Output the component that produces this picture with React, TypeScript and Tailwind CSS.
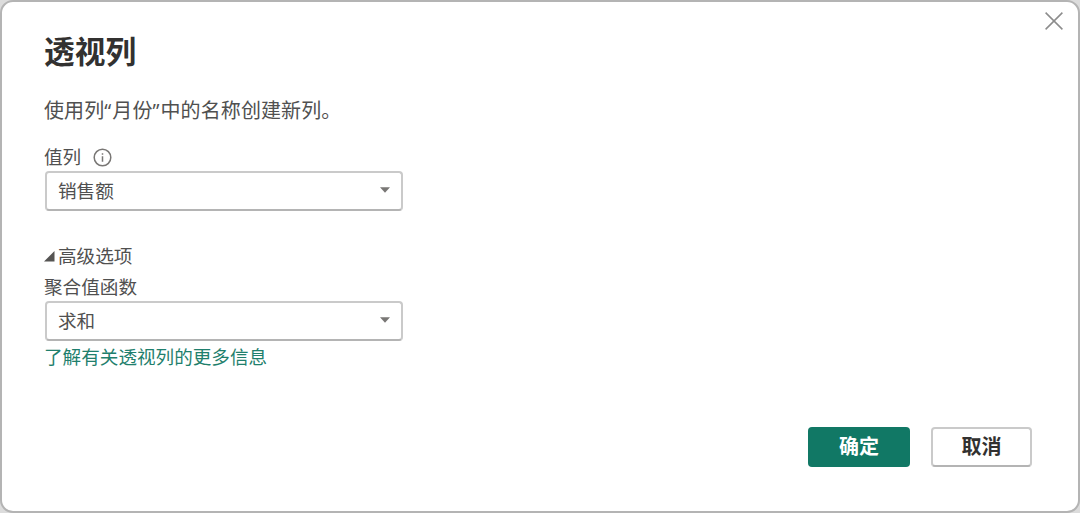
import React from 'react';

interface SelectBoxProps {
  value: string;
}

const SelectBox = ({ value }: SelectBoxProps) => {
  return (
    <button
      type="button"
      className="ml-px flex h-10 w-[358px] items-center justify-between rounded-[4px] border-2 border-[#cacaca] border-b-[#b4b4b4] bg-white pl-[11px] pr-[11px] text-[18.6px] leading-none text-[#505050]"
    >
      <span>{value}</span>
      <svg className="mb-[2px] h-[6px] w-[10px]" viewBox="0 0 10 6" fill="#797775">
        <path d="M0 0.3h10L5 5.7z" />
      </svg>
    </button>
  );
};

const App = () => {
  return (
    <div className="h-[513px] w-[1080px] overflow-hidden bg-[#dcdcdc] font-['Open_Sans','Noto_Sans_CJK_SC',sans-serif]">
      <div
        role="dialog"
        className="relative flex h-[513px] flex-col rounded-[13px] border-2 border-[#b4b4b4] bg-white pl-[42px] pr-[46px] text-[#505050]"
      >
        <button type="button" aria-label="关闭" className="absolute right-[14px] top-[9px]">
          <svg className="h-[20px] w-[20px]" viewBox="0 0 20 20" fill="none" stroke="#8c8c8c" strokeWidth="1.5">
            <path d="M1.6 1.6l16.8 16.8M18.4 1.6L1.6 18.4" />
          </svg>
        </button>

        <h1 className="mt-[29px] h-10 text-[30.7px] font-bold leading-10 text-[#323130]">透视列</h1>
        <p className="mt-[26px] h-7 text-[20px] leading-7 tracking-[0.1px]">
          使用列<span className="tracking-[1px]">“</span>月份<span className="tracking-[1px]">”</span>中的名称创建新列。
        </p>

        <div className="mt-[17px] flex h-[29px] items-center text-[18.6px] leading-[28px]">
          <span>值列</span>
          <svg className="ml-[12px] mt-px h-[19px] w-[19px]" viewBox="0 0 19 19" fill="none" stroke="#797775" strokeWidth="1.5">
            <circle cx="9.5" cy="9.5" r="8.3" />
            <path d="M9.5 8.2v5.6M9.5 5.2v1.6" />
          </svg>
        </div>
        <SelectBox value="销售额" />

        <div className="mt-[32px] flex h-[26px] items-center text-[18.6px] leading-[26px]">
          <svg className="mr-[3px] h-[11px] w-[11px]" viewBox="0 0 11 11" fill="#555453">
            <path d="M10.5 0v10.5H0z" />
          </svg>
          <span>高级选项</span>
        </div>
        <div className="mt-[4px] h-[28px] text-[18.6px] leading-[28px]">聚合值函数</div>
        <SelectBox value="求和" />
        <a href="#" className="mt-[3px] h-[26px] self-start text-[18.6px] leading-[26px] text-[#1f7f6d]">
          了解有关透视列的更多信息
        </a>

        <div className="mt-[57px] flex justify-end gap-[21px] text-[20px] font-bold leading-none">
          <button type="button" className="h-10 w-[102px] rounded-[4px] bg-[#117865] text-white">
            确定
          </button>
          <button
            type="button"
            className="h-10 w-[101px] rounded-[4px] border-2 border-[#cacaca] border-b-[#b4b4b4] bg-white text-[#323130]"
          >
            取消
          </button>
        </div>
      </div>
    </div>
  );
};

export default App;
